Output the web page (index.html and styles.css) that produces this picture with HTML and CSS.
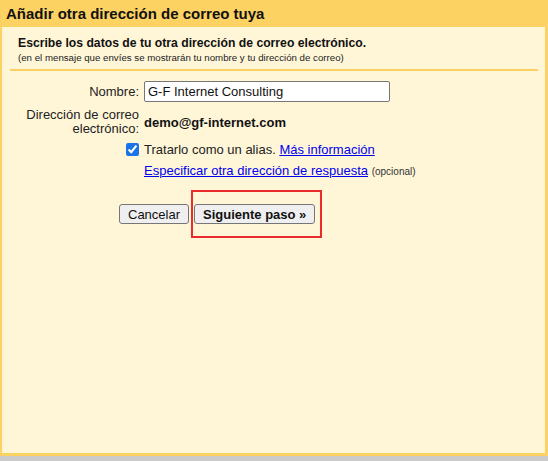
FILE: index.html
```html
<!DOCTYPE html>
<html lang="es">
<head>
  <meta charset="UTF-8">
  <title>Añadir otra dirección de correo tuya</title>
  <link rel="stylesheet" href="styles.css">
</head>
<body>
  <div class="dialog">
    <div class="dialog-title">Añadir otra dirección de correo tuya</div>

    <div class="dialog-body">
      <div class="intro">
        <div class="intro-main">Escribe los datos de tu otra dirección de correo electrónico.</div>
        <div class="intro-note">(en el mensaje que envíes se mostrarán tu nombre y tu dirección de correo)</div>
      </div>

      <div class="form">
        <label class="field-label" for="name">Nombre:</label>
        <div class="field-value">
          <input id="name" class="text-input" type="text" value="G-F Internet Consulting">
        </div>

        <div class="field-label">Dirección de correo<br>electrónico:</div>
        <div class="field-value email">demo@gf-internet.com</div>

        <div class="field-label check-cell">
          <input id="alias" class="check" type="checkbox" checked>
        </div>
        <div class="field-value">
          <label for="alias">Tratarlo como un alias.</label>
          <a href="#">Más información</a>
        </div>

        <div></div>
        <div class="field-value">
          <a href="#">Especificar otra dirección de respuesta</a>
          <span class="optional">(opcional)</span>
        </div>
      </div>

      <div class="actions">
        <button class="btn">Cancelar</button>
        <span class="highlight">
          <button class="btn btn-next">Siguiente paso »</button>
        </span>
      </div>
    </div>
  </div>
  <div class="taskbar"></div>
</body>
</html>
```

FILE: styles.css
```css
html, body {
  margin: 0;
  padding: 0;
}

body {
  width: 548px;
  height: 461px;
  overflow: hidden;
  font-family: "Liberation Sans", Arial, sans-serif;
  font-size: 13px;
  color: #222;
  background: #cbcbcb;
}

.dialog {
  display: flex;
  flex-direction: column;
  height: 456px;
  box-sizing: border-box;
  padding: 0 3px 3px 2px;
  background: #fcd263;
}

.dialog-title {
  height: 27px;
  line-height: 27px;
  padding-left: 4px;
  font-size: 15px;
  font-weight: bold;
  color: #111;
}

.dialog-body {
  flex: 1;
  background: #fff6d8;
}

.intro {
  margin: 0 7px 0 8px;
  padding: 9px 8px 6px;
  border-bottom: 2px solid #fad15f;
}

.intro-main {
  font-weight: bold;
  font-size: 12.2px;
  color: #111;
}

.intro-note {
  font-size: 9.7px;
  margin-top: 2px;
  color: #222;
}

.form {
  display: grid;
  grid-template-columns: 137px 1fr;
  column-gap: 5px;
  row-gap: 6px;
  padding-top: 10px;
  align-items: center;
}

.field-label {
  text-align: right;
  color: #222;
  line-height: 14px;
}

.field-value a {
  color: #0000ee;
}

.text-input {
  box-sizing: border-box;
  width: 246px;
  height: 21px;
  padding: 0 3px;
  font-family: "Liberation Sans", Arial, sans-serif;
  font-size: 13px;
  color: #111;
  border: 1px solid #767676;
  border-radius: 2px;
  background: #fff;
}

.email {
  font-weight: bold;
  color: #111;
}

.check-cell {
  display: flex;
  justify-content: flex-end;
}

.check {
  margin: 0;
  width: 13px;
  height: 13px;
  accent-color: #1a73e8;
}

.optional {
  font-size: 10px;
  color: #333;
}

.actions {
  display: flex;
  align-items: center;
  gap: 2px;
  padding: 12px 0 0 117px;
}

.highlight {
  padding: 12px 5px 12px 1px;
  border: 2px solid #ea2b2b;
}

.btn {
  font-family: "Liberation Sans", Arial, sans-serif;
  font-size: 13px;
  height: 20px;
  padding: 0 8px;
  color: #111;
  background: #efefef;
  border: 1px solid #767676;
  border-radius: 3px;
}

.btn-next {
  font-weight: bold;
}

.taskbar {
  height: 5px;
  background: #cbcbcb;
}
```
